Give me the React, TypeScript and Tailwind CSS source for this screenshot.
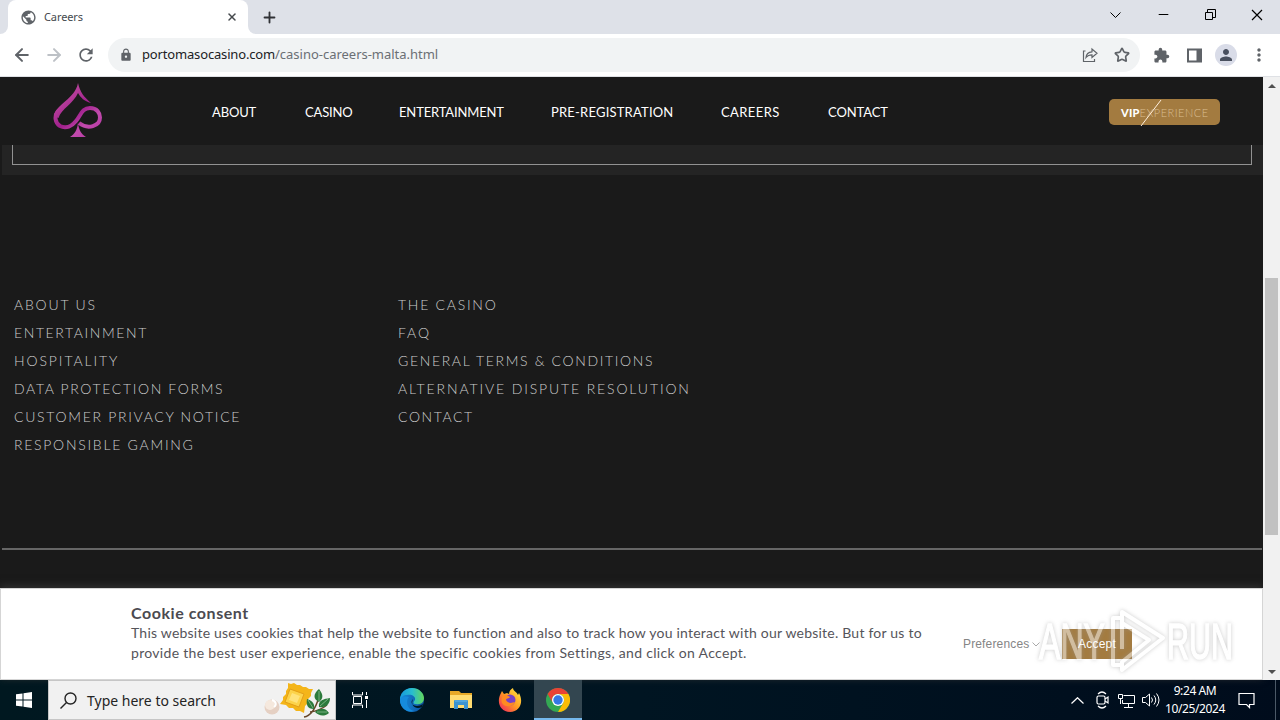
import { ReactNode } from 'react';
import { ArrowLeft, ArrowRight, ChevronUp, Minus, Plus, Star, X } from 'lucide-react';
import { MdExtension, MdLock, MdMoreVert, MdPerson, MdPublic, MdRefresh } from 'react-icons/md';

const navItems = [
  { label: 'ABOUT', style: 'w-[93px] tracking-[-0.15px]' },
  { label: 'CASINO', style: 'w-[94px] tracking-[-0.15px]' },
  { label: 'ENTERTAINMENT', style: 'w-[152px] tracking-[-0.15px]' },
  { label: 'PRE-REGISTRATION', style: 'w-[170px] tracking-[0.2px]' },
  { label: 'CAREERS', style: 'w-[107px] tracking-[0.4px]' },
  { label: 'CONTACT', style: 'w-[80px] tracking-[-0.1px]' },
];

const footerColumns = [
  [
    { label: 'ABOUT US', spacing: 'tracking-[1.8px]' },
    { label: 'ENTERTAINMENT', spacing: 'tracking-[1.6px]' },
    { label: 'HOSPITALITY', spacing: 'tracking-[1.9px]' },
    { label: 'DATA PROTECTION FORMS', spacing: 'tracking-[1.65px]' },
    { label: 'CUSTOMER PRIVACY NOTICE', spacing: 'tracking-[1.7px]' },
    { label: 'RESPONSIBLE GAMING', spacing: 'tracking-[1.73px]' },
  ],
  [
    { label: 'THE CASINO', spacing: 'tracking-[1.75px]' },
    { label: 'FAQ', spacing: 'tracking-[1.9px]' },
    { label: 'GENERAL TERMS & CONDITIONS', spacing: 'tracking-[1.65px]' },
    { label: 'ALTERNATIVE DISPUTE RESOLUTION', spacing: 'tracking-[1.87px]' },
    { label: 'CONTACT', spacing: 'tracking-[1.6px]' },
  ],
];

const TabStrip = () => (
  <div className="flex h-[34px] items-end bg-[#dee1e8]">
    <div className="size-2 bg-white">
      <div className="size-2 rounded-br-lg bg-[#dee1e8]" />
    </div>
    <div className="flex h-[34px] w-60 items-center rounded-t-lg bg-white pl-[12px] pr-[10px]">
      <MdPublic className="size-[17px] text-[#5f6368]" />
      <span className="ml-[7px] flex-1 font-['Noto_Sans'] text-[11px] tracking-[-0.1px] text-[#45494d]">Careers</span>
      <X className="size-[12px] text-[#45494d]" strokeWidth={3} />
    </div>
    <div className="size-2 bg-white">
      <div className="size-2 rounded-bl-lg bg-[#dee1e8]" />
    </div>
    <div className="flex h-[34px] items-center pl-[5px]">
      <Plus className="size-[17px] text-[#303236]" strokeWidth={2.6} />
    </div>
    <div className="ml-auto flex h-[29px] items-center self-start pr-[17px] text-black">
      <svg className="mr-[35px] h-[6px] w-[11px]" viewBox="0 0 11 6" fill="none" stroke="currentColor">
        <path d="m.5.5 5 5 5-5" />
      </svg>
      <Minus className="mr-[34px] size-[15px]" strokeWidth={1.8} />
      <svg className="mr-[35px] size-[11px]" viewBox="0 0 11 11" fill="none" stroke="currentColor">
        <path d="M.5 3.500h7v7h-7zM2.500 3V.5h8v8H8" />
      </svg>
      <svg className="size-[12px]" viewBox="0 0 12 12" stroke="currentColor" strokeWidth="1.2">
        <path d="m1 1 10 10M11 1 1 11" />
      </svg>
    </div>
  </div>
);

const Toolbar = () => (
  <div className="flex h-[43px] items-center border-b border-[#dfe1e5] bg-white pl-[12px] pr-[11px] text-[#5f6368]">
    <ArrowLeft className="size-[20px]" strokeWidth={2.4} />
    <ArrowRight className="ml-[12px] size-[20px] text-[#bdc1c6]" strokeWidth={2.4} />
    <MdRefresh className="ml-[12px] size-[20px]" />
    <div className="ml-[12px] flex h-[34px] w-[1032px] shrink-0 items-center rounded-full bg-[#f1f3f4] pl-[11px] pr-[10px]">
      <MdLock className="size-[14px]" />
      <span className="ml-[9px] font-['Noto_Sans'] text-[13px] tracking-[-0.16px] text-[#202124]">
        portomasocasino.com<span className="tracking-[-0.02px] text-[#6b6f74]">/casino-careers-malta.html</span>
      </span>
      <svg className="ml-auto size-4" viewBox="0 0 16 16" fill="none" stroke="currentColor" strokeWidth="1.2">
        <path d="M3.500 4h-2v10.500h11V12M4 10.500C4.300 6.500 6.500 5 10 4.800V2l5 4.300-5 4.200V7.800C7.500 7.800 5.500 8.500 4 10.500Z" />
      </svg>
      <Star className="ml-[16px] size-4" strokeWidth={2.5} />
    </div>
    <MdExtension className="ml-[13px] size-[17px] shrink-0" />
    <svg className="ml-[17px] size-[15px] shrink-0" viewBox="0 0 15 15" fill="none" stroke="currentColor" strokeWidth="2">
      <path d="M1 1.500h13v12H1z" />
      <path d="M12 2v11" strokeWidth="5" />
    </svg>
    <div className="ml-[13px] flex size-[22px] shrink-0 items-center justify-center rounded-full bg-[#d9dce8] text-[#49505f]">
      <MdPerson className="size-[18px]" />
    </div>
    <MdMoreVert className="ml-[12px] size-[20px] shrink-0" />
  </div>
);

const SpadeLogo = () => (
  <svg className="h-[56px] w-[50px]" viewBox="0 0 50 56">
    <defs>
      <linearGradient id="spade" x1="0" y1="0" x2="50" y2="56" gradientUnits="userSpaceOnUse">
        <stop offset="0" stopColor="#c45fa8" />
        <stop offset=".3" stopColor="#b33b98" />
        <stop offset=".5" stopColor="#a01f8c" />
        <stop offset=".7" stopColor="#c24bad" />
        <stop offset="1" stopColor="#b02f9d" />
      </linearGradient>
    </defs>
    <path d="M25 0C27 9 31 14 38 20C31 18 28 15 25 10C21 20 8 26 5.500 35L1 33C3 21 22 16 25 0Z" fill="url(#spade)" />
    <path
      d="M5 28C1 33 2 40 7 43C13 46 19 43 23 38C28 32 29 25 37 25C44 25 47 30 47 34.500C47 43 35 47 26 40"
      fill="none"
      stroke="url(#spade)"
      strokeWidth="4"
    />
    <path d="M25 40c1 7 3 11 8 14H17c5-3 7-7 8-14Z" fill="url(#spade)" />
  </svg>
);

const SiteHeader = () => (
  <header className="flex h-[68px] shrink-0 items-center bg-[#1a1a1a] pl-[53px] pr-[43px]">
    <SpadeLogo />
    <nav className="ml-[109px] flex pt-[3px] font-['Lato'] text-[13px] text-white">
      {navItems.map((item) => (
        <a key={item.label} className={`whitespace-nowrap ${item.style}`}>
          {item.label}
        </a>
      ))}
    </nav>
    <div className="relative ml-auto mt-[2px] flex h-[26px] w-[111px] items-center rounded-[5px] bg-[#a37b40] pl-[12px] pt-[2px] font-['Lato'] text-[11px]">
      <b className="font-black tracking-[0.2px] text-white">VIP</b>
      <span className="font-light tracking-[0.5px] text-[#d9bd92]">EXPERIENCE</span>
      <svg className="absolute left-[31px] top-0 h-[28px] w-[22px]" viewBox="0 0 22 28" stroke="#fff0df" strokeWidth="1">
        <path d="M1 27 21 1" />
      </svg>
    </div>
  </header>
);

const Footer = () => (
  <footer className="h-[375px] border-b-2 border-[#666] pl-3 pt-[116px]">
    <div className="flex font-['Lato'] text-[14px] font-light leading-7 text-[#cccccc]">
      {footerColumns.map((column, i) => (
        <ul key={i} className="w-96">
          {column.map((link) => (
            <li key={link.label} className={`whitespace-nowrap ${link.spacing}`}>
              {link.label}
            </li>
          ))}
        </ul>
      ))}
    </div>
  </footer>
);

const CookieBanner = () => (
  <section className="flex h-[92px] items-start border border-[#d5d5d5] bg-white pl-[130px] pt-[14px] text-[#4b4a50] shadow-[0_-2px_8px_#333]">
    <div className="w-[832px] font-['Lato']">
      <h2 className="text-[16px] font-bold leading-5 tracking-[0.55px]">Cookie consent</h2>
      <p className="whitespace-nowrap text-[14px] leading-5 tracking-[0.22px] text-[#55545a]">
        This website uses cookies that help the website to function and also to track how you interact with our website. But for us to
        <br />
        <span className="tracking-[0.31px]">
          provide the best user experience, enable the specific cookies from Settings, and click on Accept.
        </span>
      </p>
    </div>
    <div className="mt-[26px] flex h-[30px] items-center font-['Liberation_Sans'] text-[12px]">
      <span className="w-[67px] whitespace-nowrap tracking-[0.15px] text-[#858585]">Preferences</span>
      <svg className="ml-[2px] h-[5px] w-[8px]" viewBox="0 0 8 5" fill="none" stroke="#aaa">
        <path d="m.5.5 3.500 3.500L7.500.5" />
      </svg>
      <button className="ml-[22px] h-[30px] w-[70px] bg-[#a37b40] tracking-[0.2px] text-white">Accept</button>
    </div>
  </section>
);

const Watermark = () => (
  <div className="pointer-events-none absolute left-[1036px] top-[607px] h-[68px] w-[200px]">
    <svg viewBox="0 0 200 68" className="size-full overflow-visible opacity-50 [filter:drop-shadow(0_0_2px_#999)]">
      <g fill="#fff" fontFamily="Liberation Sans" fontSize="50" stroke="#fff" strokeWidth="1.500">
        <text x="3" y="52" textLength="66" lengthAdjust="spacingAndGlyphs">ANY</text>
        <text x="131" y="52" textLength="66" lengthAdjust="spacingAndGlyphs">RUN</text>
      </g>
      <g fill="none" stroke="#fff" strokeWidth="4" strokeLinejoin="round">
        <path d="M84 11h-7v47h7" />
        <path d="M86 42V5l41 26-41 32v-8l27-22-27-17" />
      </g>
    </svg>
  </div>
);

const ScrollBar = () => (
  <div className="flex w-[17px] flex-col items-center bg-[#f1f1f1] pb-[6px] pt-[7px]">
    <div className="h-0 border-x-4 border-b-4 border-x-transparent border-b-[#505050]" />
    <div className="mt-[190px] h-[257px] w-[13px] bg-[#c1c1c1]" />
    <div className="mt-auto h-0 border-x-4 border-t-4 border-x-transparent border-t-[#505050]" />
  </div>
);

const SearchArt = () => (
  <svg className="h-[38px] w-[70px]" viewBox="0 0 70 38">
    <circle cx="8" cy="26" r="7.500" fill="#e5d0c3" />
    <circle cx="6" cy="24" r="5" fill="#f5e8dd" />
    <path d="M8 19c4 1 5 5 2 7" fill="none" stroke="#fff" strokeWidth="2" />
    <path
      d="m24 2 3 1 3-1 3 2 3 0 3 2 3 0 3 2 4 0-2 4 0 3-3 3 0 4-3 3-1 7-4-2-4 0-3-3-4 0-3-3-6-1 3-4 0-3 3-3 0-3 2-3Z"
      fill="#f4b519"
    />
    <path d="m26 8 14 5-5 13-14-5Z" fill="#fcd34a" stroke="#e39f18" />
    <path d="m28 12 8 3-3 7-8-3Z" fill="#ffe37c" />
    <path d="M40 36c8-1 12-10 15-20M46 31c7-1 12-3 17-7" fill="none" stroke="#68482c" strokeWidth="1.500" />
    <path
      d="M55 21c-6-3-6-8 0-13 5 6 4 10 0 13ZM50 28c-7 0-8-5-7-10 6 2 8 5 7 10ZM55 26c-1-7 5-8 11-9 0 7-5 10-11 9ZM51 31c5-5 11-4 14 1-5 4-10 3-14-1Z"
      fill="#2c7a3c"
    />
    <path d="M55 20V10M49 27l-5-8M56 25l8-7M53 31h10" stroke="#99c99d" strokeWidth=".7" />
  </svg>
);

const EdgeIcon = () => (
  <svg className="size-6" viewBox="0 0 24 24">
    <defs>
      <linearGradient id="edgeTop">
        <stop stopColor="#1699dd" />
        <stop offset=".5" stopColor="#28bdd0" />
        <stop offset="1" stopColor="#63d75a" />
      </linearGradient>
      <linearGradient id="edgeLow">
        <stop stopColor="#1890e0" />
        <stop offset="1" stopColor="#0c4d9b" />
      </linearGradient>
    </defs>
    <circle cx="12" cy="12" r="12" fill="url(#edgeLow)" />
    <path d="M0 12C0 5 5 0 12 0c7 0 12 5 12 10 0 4-3 7-8 6-3 0-3-2-1-4 1-4-4-6-8-5-4 0-6 2-7 5Z" fill="url(#edgeTop)" />
    <path d="M9 9c-4 4-2 12 5 14-8 2-14-4-14-11 2-4 6-4 9-3Z" fill="#168bdd" />
    <path d="M13 11c-3 3-1 7 4 7 2 0 4-1 6-2l-1 3c-6 3-12-1-9-8Z" fill="#001822" />
  </svg>
);

const FolderIcon = () => (
  <svg className="h-[20px] w-[22px]" viewBox="0 0 22 20">
    <path d="M0 1h9l2 2h11v15H0Z" fill="#e7a928" />
    <path d="M0 5h22v13H0Z" fill="#ffdc71" />
    <path d="M4 19v-8q0-1 1-1h12q1 0 1 1v8h-4v-4H8v4Z" fill="#3c94d1" />
    <path d="M5 11h12" stroke="#66b9e9" />
  </svg>
);

const FirefoxIcon = () => (
  <svg className="size-[24px]" viewBox="0 0 24 24">
    <defs>
      <linearGradient id="fox" x1="1" y1="0" x2="0" y2="1">
        <stop stopColor="#fff044" />
        <stop offset=".5" stopColor="#ff9b23" />
        <stop offset="1" stopColor="#f01864" />
      </linearGradient>
    </defs>
    <path d="M3 5 4 3l2 3 3-1 2 1c0-3 2-5 4-6 0 3 4 4 5 7l1-2c5 9 1 19-9 19C2 24-2 14 3 5Z" fill="url(#fox)" />
    <circle cx="12" cy="12" r="5.500" fill="#7741c6" />
    <path d="M5 7c3-1 5 1 7 2-1 2-4 1-4 3 2 4 6 3 9 2-2 5-10 6-13 1-1-3 0-6 1-8Z" fill="#ff8b22" />
  </svg>
);

const ChromeIcon = () => (
  <svg className="size-6" viewBox="0 0 24 24">
    <circle cx="12" cy="12" r="12" fill="#34a853" />
    <path d="M1.600 6A12 12 0 0 1 22.400 6H12a6 6 0 0 0-5.200 9Z" fill="#e94235" />
    <path d="M22.400 6A12 12 0 0 1 12 24l5.200-9A6 6 0 0 0 12 6Z" fill="#fbbc05" />
    <circle cx="12" cy="12" r="6" fill="#fff" />
    <circle cx="12" cy="12" r="4.700" fill="#3478e5" />
  </svg>
);

const TaskButton = ({ active, children }: { active?: boolean; children: ReactNode }) => (
  <div
    className={`flex h-10 items-center justify-center ${
      active ? 'w-12 border-b-2 border-[#76b9ed] bg-[#334650] pt-[2px]' : 'w-[49px]'
    }`}>
    {children}
  </div>
);

const Taskbar = () => (
  <div className="flex h-10 items-center bg-linear-to-r from-[#001820] via-[#001522] to-[#000c1c] text-white">
    <div className="flex w-12 justify-center">
      <svg className="size-4" viewBox="0 0 16 16" fill="white">
        <path d="M0 2.300 6.500 1.400v6.100H0ZM7.500 1.200 16 0v7.500H7.500ZM0 8.500h6.500v6.100L0 13.700ZM7.500 8.500H16V16l-8.500-1.200Z" />
      </svg>
    </div>
    <div className="flex h-10 w-[288px] items-center border border-[#c6c6c6] bg-[#f1f1f1] pl-[11px] text-[#242424]">
      <svg className="size-[17px]" viewBox="0 0 17 17" fill="none" stroke="currentColor" strokeWidth="1.400">
        <circle cx="10.500" cy="6.500" r="5.500" />
        <path d="m6.500 10.500-6 6" />
      </svg>
      <span className="ml-[10px] font-['Noto_Sans'] text-[14px]">Type here to search</span>
      <div className="ml-auto pr-px">
        <SearchArt />
      </div>
    </div>
    <div className="flex">
      <TaskButton>
        <svg className="mr-[2px] size-4" viewBox="0 0 16 16" fill="none" stroke="white">
          <path d="M.5 0v3h10V0M.5 16v-3h10v3M1.500 4.500h8v7h-8zM14.500 0v3M14.500 8v8" />
          <path d="M13 4h3v3h-3z" fill="white" stroke="none" />
        </svg>
      </TaskButton>
      <div className="flex pl-[2px]">
        <TaskButton><EdgeIcon /></TaskButton>
        <TaskButton><FolderIcon /></TaskButton>
        <TaskButton><FirefoxIcon /></TaskButton>
        <TaskButton active><ChromeIcon /></TaskButton>
      </div>
    </div>
    <div className="ml-auto flex h-10 items-center">
      <svg className="h-[7px] w-[13px]" viewBox="0 0 13 7" fill="none" stroke="white" strokeWidth="1.200">
        <path d="M.5 6.500 6.500.7l6 5.800" />
      </svg>
      <svg className="ml-[12px] h-[18px] w-[14px]" viewBox="0 0 14 18" fill="none" stroke="white" strokeWidth="1.200">
        <rect x="1" y="5" width="8" height="8" rx="1.500" />
        <path d="m9 8 3-2v6l-3-2M2 3q4-4 8 0M2 15q4 4 8 0" />
      </svg>
      <svg className="ml-[8px] size-[17px]" viewBox="0 0 17 17" fill="none" stroke="white">
        <path d="M5.500 3.500h11v8h-12V8M10.500 12v3M6 15.500h9M.5 2.500h4v4h-4zM2.500 7v5" />
      </svg>
      <svg className="ml-[7px] h-[16px] w-[18px]" viewBox="0 0 18 16" fill="none" stroke="white">
        <path d="M.5 5.500h3L7.500 2v12l-4-3.500h-3zM9.500 5.500q2 2.500 0 5M12 3.500q3.500 4.500 0 9M14.500 1.500q5 6.500 0 13" />
      </svg>
      <div className="ml-[5px] w-[60px] text-center font-['Noto_Sans'] text-[12px] leading-[18px] tracking-[-0.4px]">
        <div>9:24 AM</div>
        <div>10/25/2024</div>
      </div>
      <svg className="ml-[13px] mr-[20px] size-[17px]" viewBox="0 0 17 17" fill="none" stroke="white" strokeWidth="1.200">
        <path d="M1 1.500h15v11h-4.500v3l-3-3H1Z" />
      </svg>
      <div className="mr-1 h-10 w-px bg-[#4b5967]" />
    </div>
  </div>
);

const App = () => (
  <div className="relative h-[720px] w-[1280px] overflow-hidden bg-[#1a1a1a]">
    <TabStrip />
    <Toolbar />
    <div className="flex h-[603px]">
      <main className="flex w-[1263px] flex-col">
        <SiteHeader />
        <div className="ml-[2px] h-[30px] bg-[#242424] pl-[10px] pr-[11px]">
          <div className="h-5 border-x border-b border-[#929292]" />
        </div>
        <div className="ml-[2px] mr-px">
          <Footer />
        </div>
        <div className="mt-auto">
          <CookieBanner />
        </div>
      </main>
      <ScrollBar />
    </div>
    <Taskbar />
    <Watermark />
  </div>
);

export default App;
